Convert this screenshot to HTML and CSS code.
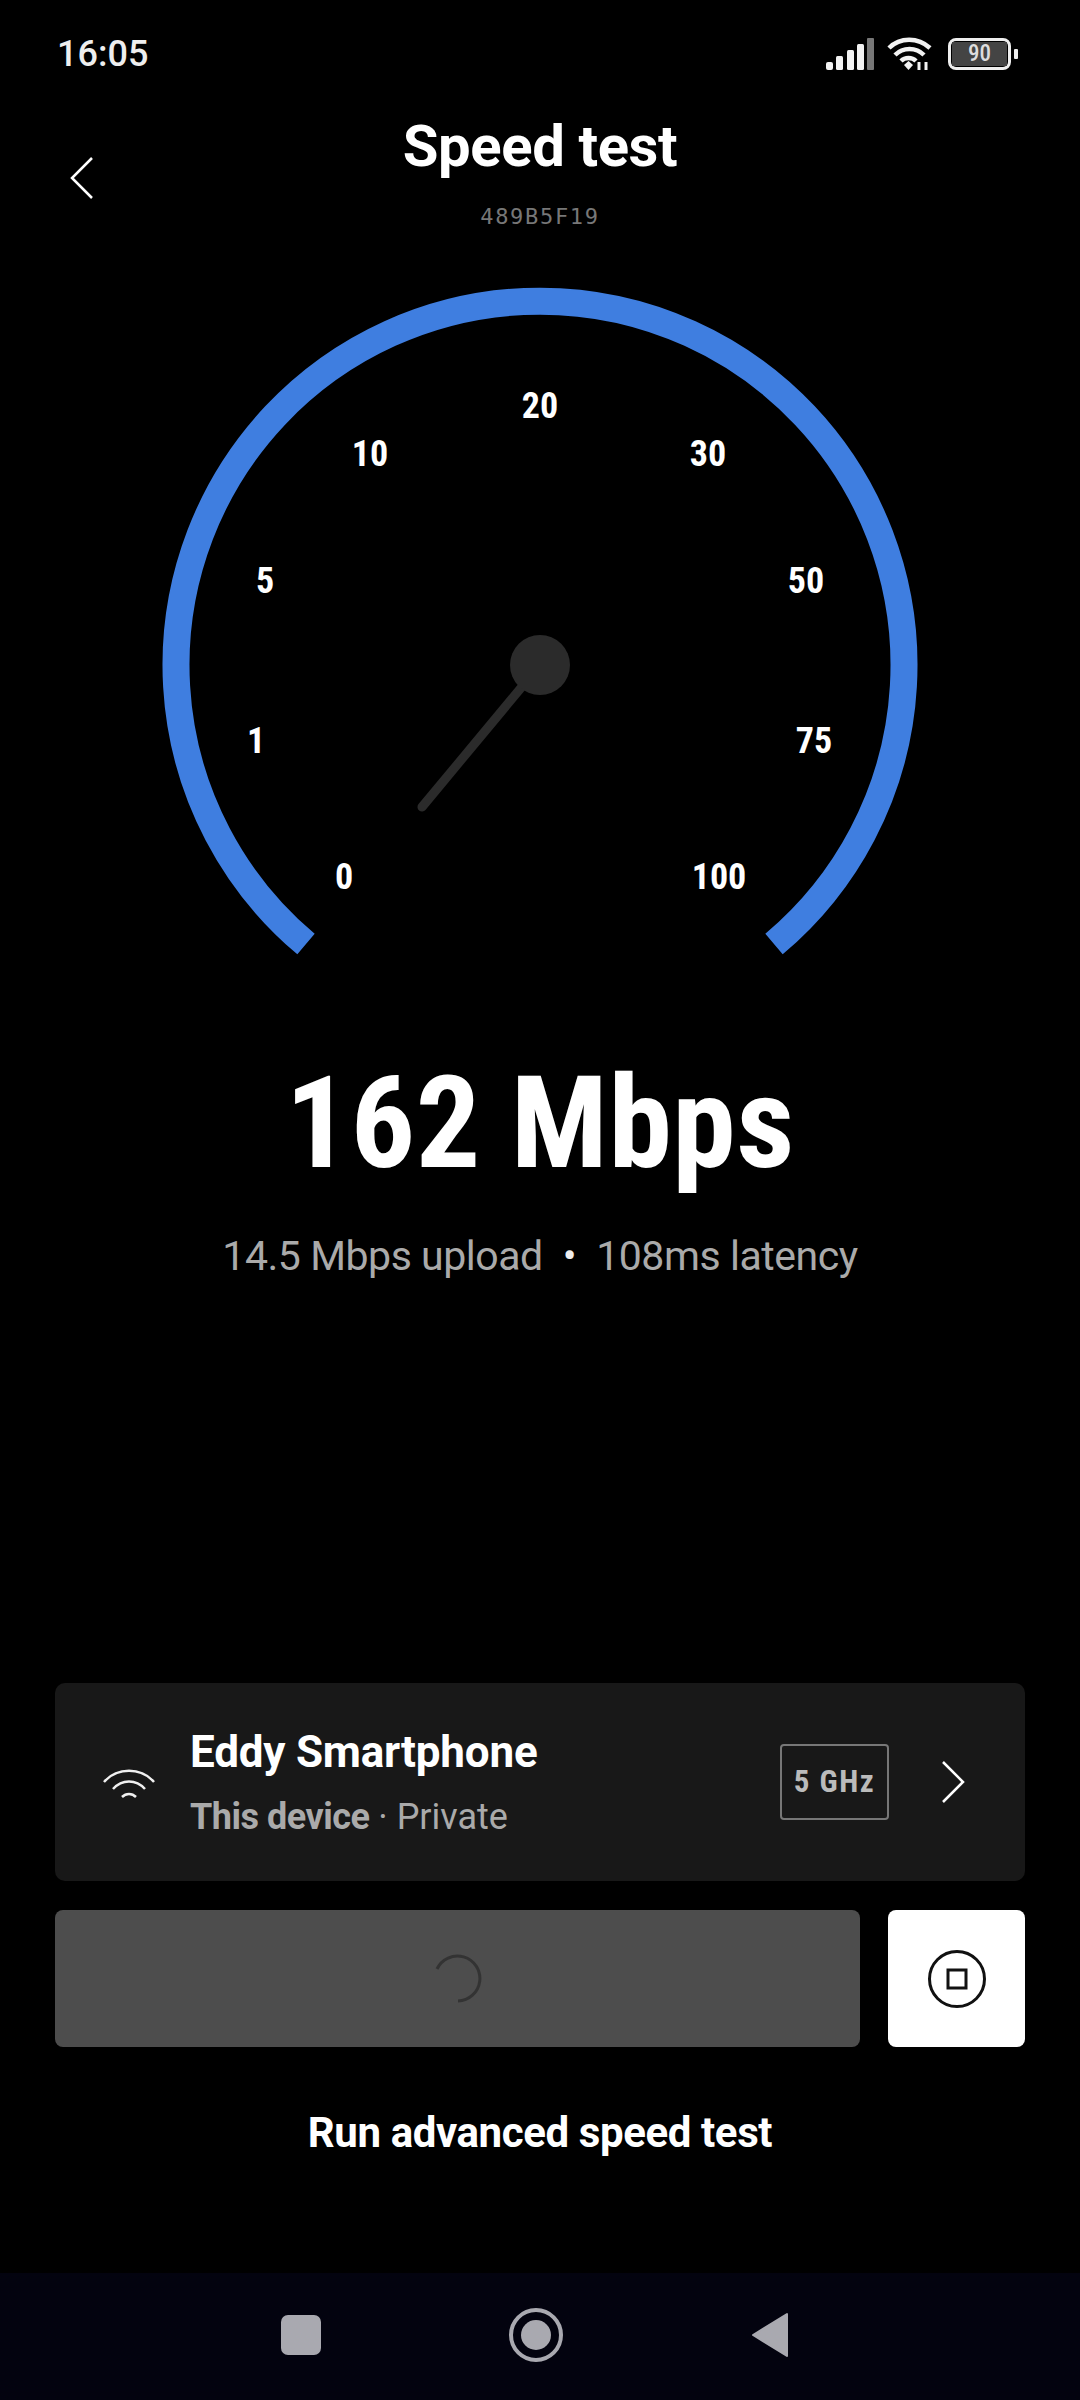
FILE: index.html
```html
<!DOCTYPE html>
<html>
<head>
    <title>Speed test</title>
    <link rel="stylesheet" href="styles.css">
</head>
<body>
    <div class="status-bar">
        <span class="clock">16:05</span>
        <div class="status-icons">
            <svg class="signal" width="48" height="34" viewBox="0 0 48 34">
                <rect x="0" y="25" width="7" height="8" rx="2" fill="#f2f2f2"/>
                <rect x="10" y="19" width="7" height="14" rx="1.5" fill="#f2f2f2"/>
                <rect x="21" y="13" width="7" height="20" rx="1.5" fill="#f2f2f2"/>
                <rect x="31" y="7" width="7" height="26" rx="1.5" fill="#f2f2f2"/>
                <rect x="41" y="1" width="7" height="32" rx="1" fill="#777"/>
            </svg>
            <svg class="wifi" width="46" height="34" viewBox="0 0 46 34">
                <g fill="none" stroke="#f2f2f2" stroke-width="4.5">
                    <path d="M2 11C13 0 31 0 43 11"/>
                    <path d="M8 18C16 10 29 10 37 18"/>
                    <path d="M14 24C18 20 25 20 29 24"/>
                </g>
                <path d="M17 28L21.500 24L26 28L21.500 33Z" fill="#f2f2f2"/>
                <path d="M32 33V25M39 33V25" stroke="#f2f2f2" stroke-width="3"/>
            </svg>
            <div class="battery">
                <div class="battery-body"><span class="battery-level">90</span></div>
                <div class="battery-nub"></div>
            </div>
        </div>
    </div>

    <div class="header">
        <svg class="back" width="24" height="42" viewBox="0 0 24 42">
            <path d="M22 1L2 21L22 41" fill="none" stroke="#fff" stroke-width="2.500"/>
        </svg>
        <div class="heading">
            <h1 class="title">Speed test</h1>
            <div class="serial">489B5F19</div>
        </div>
    </div>

    <svg class="gauge" width="1080" height="690" viewBox="0 0 1080 690">
        <path class="gauge-arc" d="M306 663A364 364 0 1 1 774 663"/>
        <line class="needle" x1="540" y1="384" x2="422" y2="526"/>
        <circle class="hub" cx="540" cy="384" r="30"/>
        <text class="tick" x="344" y="608">0</text>
        <text class="tick" x="256" y="472">1</text>
        <text class="tick" x="265" y="312">5</text>
        <text class="tick" x="370" y="185">10</text>
        <text class="tick" x="540" y="137">20</text>
        <text class="tick" x="708" y="185">30</text>
        <text class="tick" x="806" y="312">50</text>
        <text class="tick" x="814" y="472">75</text>
        <text class="tick" x="719" y="608">100</text>
    </svg>

    <div class="result">
        <div class="speed">162 Mbps</div>
        <div class="extra">14.5 Mbps upload<span class="dot">•</span>108ms latency</div>
    </div>

    <div class="spacer"></div>

    <div class="device-card">
        <svg class="device-wifi" width="54" height="32" viewBox="0 0 54 32">
            <g fill="none" stroke="#f0f0f0" stroke-width="2.500">
                <path d="M2 13C15 -2 39 -2 52 13"/>
                <path d="M11 20C20 10 34 10 43 20"/>
                <path d="M20 28C24 24 30 24 34 28"/>
            </g>
        </svg>
        <div class="device-info">
            <div class="device-name">Eddy Smartphone</div>
            <div class="device-sub"><b>This device</b> · Private</div>
        </div>
        <div class="band">5 GHz</div>
        <svg class="more" width="24" height="42" viewBox="0 0 24 42">
            <path d="M2 1L22 21L2 41" fill="none" stroke="#fff" stroke-width="2.500"/>
        </svg>
    </div>

    <div class="actions">
        <div class="run-button">
            <svg width="48" height="50" viewBox="0 0 48 50">
                <path d="M3 15A22.500 22.500 0 1 1 24 47" fill="none" stroke="#333" stroke-width="3"/>
            </svg>
        </div>
        <div class="stop-button">
            <svg width="60" height="60" viewBox="0 0 60 60">
                <circle cx="30" cy="30" r="27.500" fill="none" stroke="#111" stroke-width="3"/>
                <rect x="21" y="21" width="18" height="18" fill="none" stroke="#111" stroke-width="3"/>
            </svg>
        </div>
    </div>

    <div class="advanced">Run advanced speed test</div>

    <div class="nav-bar">
        <div class="nav-square"></div>
        <div class="nav-home"><div class="nav-home-dot"></div></div>
        <svg class="nav-back" width="38" height="46" viewBox="0 0 38 46">
            <path d="M36 2V44L2 23Z" fill="#a9a9b0" stroke="#a9a9b0" stroke-width="2" stroke-linejoin="round"/>
        </svg>
    </div>
</body>
</html>
```

FILE: styles.css
```css
html, body {
    margin: 0;
    padding: 0;
}

body {
    width: 1080px;
    height: 2400px;
    background-color: #000;
    color: #fff;
    font-family: Roboto, "Liberation Sans", sans-serif;
    font-stretch: 85%;
    display: flex;
    flex-direction: column;
    overflow: hidden;
}

.status-bar {
    display: flex;
    justify-content: space-between;
    align-items: center;
    height: 44px;
    padding: 32px 62px 0 57px;
}

.clock {
    font-size: 36px;
    font-stretch: 100%;
    font-weight: 500;
    color: #eee;
}

.status-icons {
    display: flex;
    align-items: center;
    gap: 13px;
}

.battery {
    display: flex;
    align-items: center;
    gap: 3px;
    margin-left: 2px;
}

.battery-body {
    width: 55px;
    height: 24px;
    padding: 1px;
    border: 3px solid #eee;
    border-radius: 8px;
    display: flex;
}

.battery-level {
    flex: 1;
    background-color: #444;
    color: #ddd;
    font-size: 23px;
    font-weight: 500;
    line-height: 24px;
    text-align: center;
}

.battery-nub {
    width: 4px;
    height: 10px;
    background-color: #eee;
    border-radius: 1px;
}

.header {
    display: flex;
    justify-content: center;
    position: relative;
    padding-top: 36px;
}

.back {
    position: absolute;
    left: 70px;
    top: 81px;
}

.heading {
    text-align: center;
}

.title {
    margin: 0;
    font-size: 58px;
    font-stretch: 94%;
    font-weight: 700;
    letter-spacing: -0.4px;
    line-height: 68px;
}

.serial {
    margin-top: 24px;
    font-family: "DejaVu Sans Mono", monospace;
    font-stretch: 100%;
    font-size: 22px;
    letter-spacing: 1.7px;
    line-height: 26px;
    color: #777;
}

.gauge {
    display: block;
    margin-top: 51px;
}

.gauge-arc {
    fill: none;
    stroke: #3f7ee0;
    stroke-width: 27;
}

.needle {
    stroke: #2b2b2b;
    stroke-width: 9;
    stroke-linecap: round;
}

.hub {
    fill: #2b2b2b;
}

.tick {
    fill: #fff;
    font-size: 36px;
    font-weight: 700;
    text-anchor: middle;
}

.result {
    text-align: center;
    margin-top: 87px;
}

.speed {
    font-size: 128px;
    font-weight: 700;
    letter-spacing: 0.5px;
    line-height: 130px;
}

.extra {
    margin-top: 43px;
    font-size: 41px;
    font-stretch: 93%;
    font-weight: 400;
    letter-spacing: -0.45px;
    line-height: 50px;
    color: #aaa;
}

.dot {
    margin: 0 20px;
    color: #eee;
}

.spacer {
    flex: 1;
}

.device-card {
    display: flex;
    align-items: center;
    height: 198px;
    margin: 0 55px;
    padding: 0 60px 0 47px;
    background-color: #181818;
    border-radius: 10px;
}

.device-wifi {
    margin-top: 6px;
}

.device-info {
    flex: 1;
    margin-left: 34px;
}

.device-name {
    font-size: 44px;
    font-stretch: 93%;
    font-weight: 700;
    letter-spacing: -0.2px;
    line-height: 54px;
}

.device-sub {
    margin-top: 16px;
    font-size: 36px;
    font-stretch: 93%;
    font-weight: 400;
    line-height: 44px;
    color: #aaa;
}

.device-sub b {
    font-weight: 700;
    letter-spacing: -0.5px;
}

.band {
    width: 105px;
    height: 72px;
    line-height: 72px;
    border: 2px solid #777;
    border-radius: 4px;
    text-align: center;
    font-size: 31px;
    font-weight: 700;
    letter-spacing: 1.5px;
    color: #bbb;
}

.more {
    margin-left: 52px;
}

.actions {
    display: flex;
    gap: 28px;
    height: 137px;
    margin: 29px 55px 0;
}

.run-button {
    flex: 1;
    display: flex;
    align-items: center;
    justify-content: center;
    background-color: #4d4d4d;
    border-radius: 8px;
}

.stop-button {
    width: 137px;
    display: flex;
    align-items: center;
    justify-content: center;
    background-color: #fff;
    border-radius: 8px;
}

.advanced {
    margin-top: 60px;
    text-align: center;
    font-size: 42px;
    font-stretch: 92%;
    font-weight: 700;
    letter-spacing: -0.4px;
    line-height: 52px;
}

.nav-bar {
    display: flex;
    align-items: center;
    justify-content: space-between;
    box-sizing: border-box;
    height: 127px;
    margin-top: 114px;
    padding: 0 291px 3px 281px;
    background-color: #03030f;
}

.nav-square {
    width: 40px;
    height: 40px;
    background-color: #a9a9b0;
    border-radius: 7px;
}

.nav-home {
    width: 46px;
    height: 46px;
    border: 4px solid #a9a9b0;
    border-radius: 50%;
    display: flex;
    align-items: center;
    justify-content: center;
}

.nav-home-dot {
    width: 30px;
    height: 30px;
    background-color: #a9a9b0;
    border-radius: 50%;
}
```
